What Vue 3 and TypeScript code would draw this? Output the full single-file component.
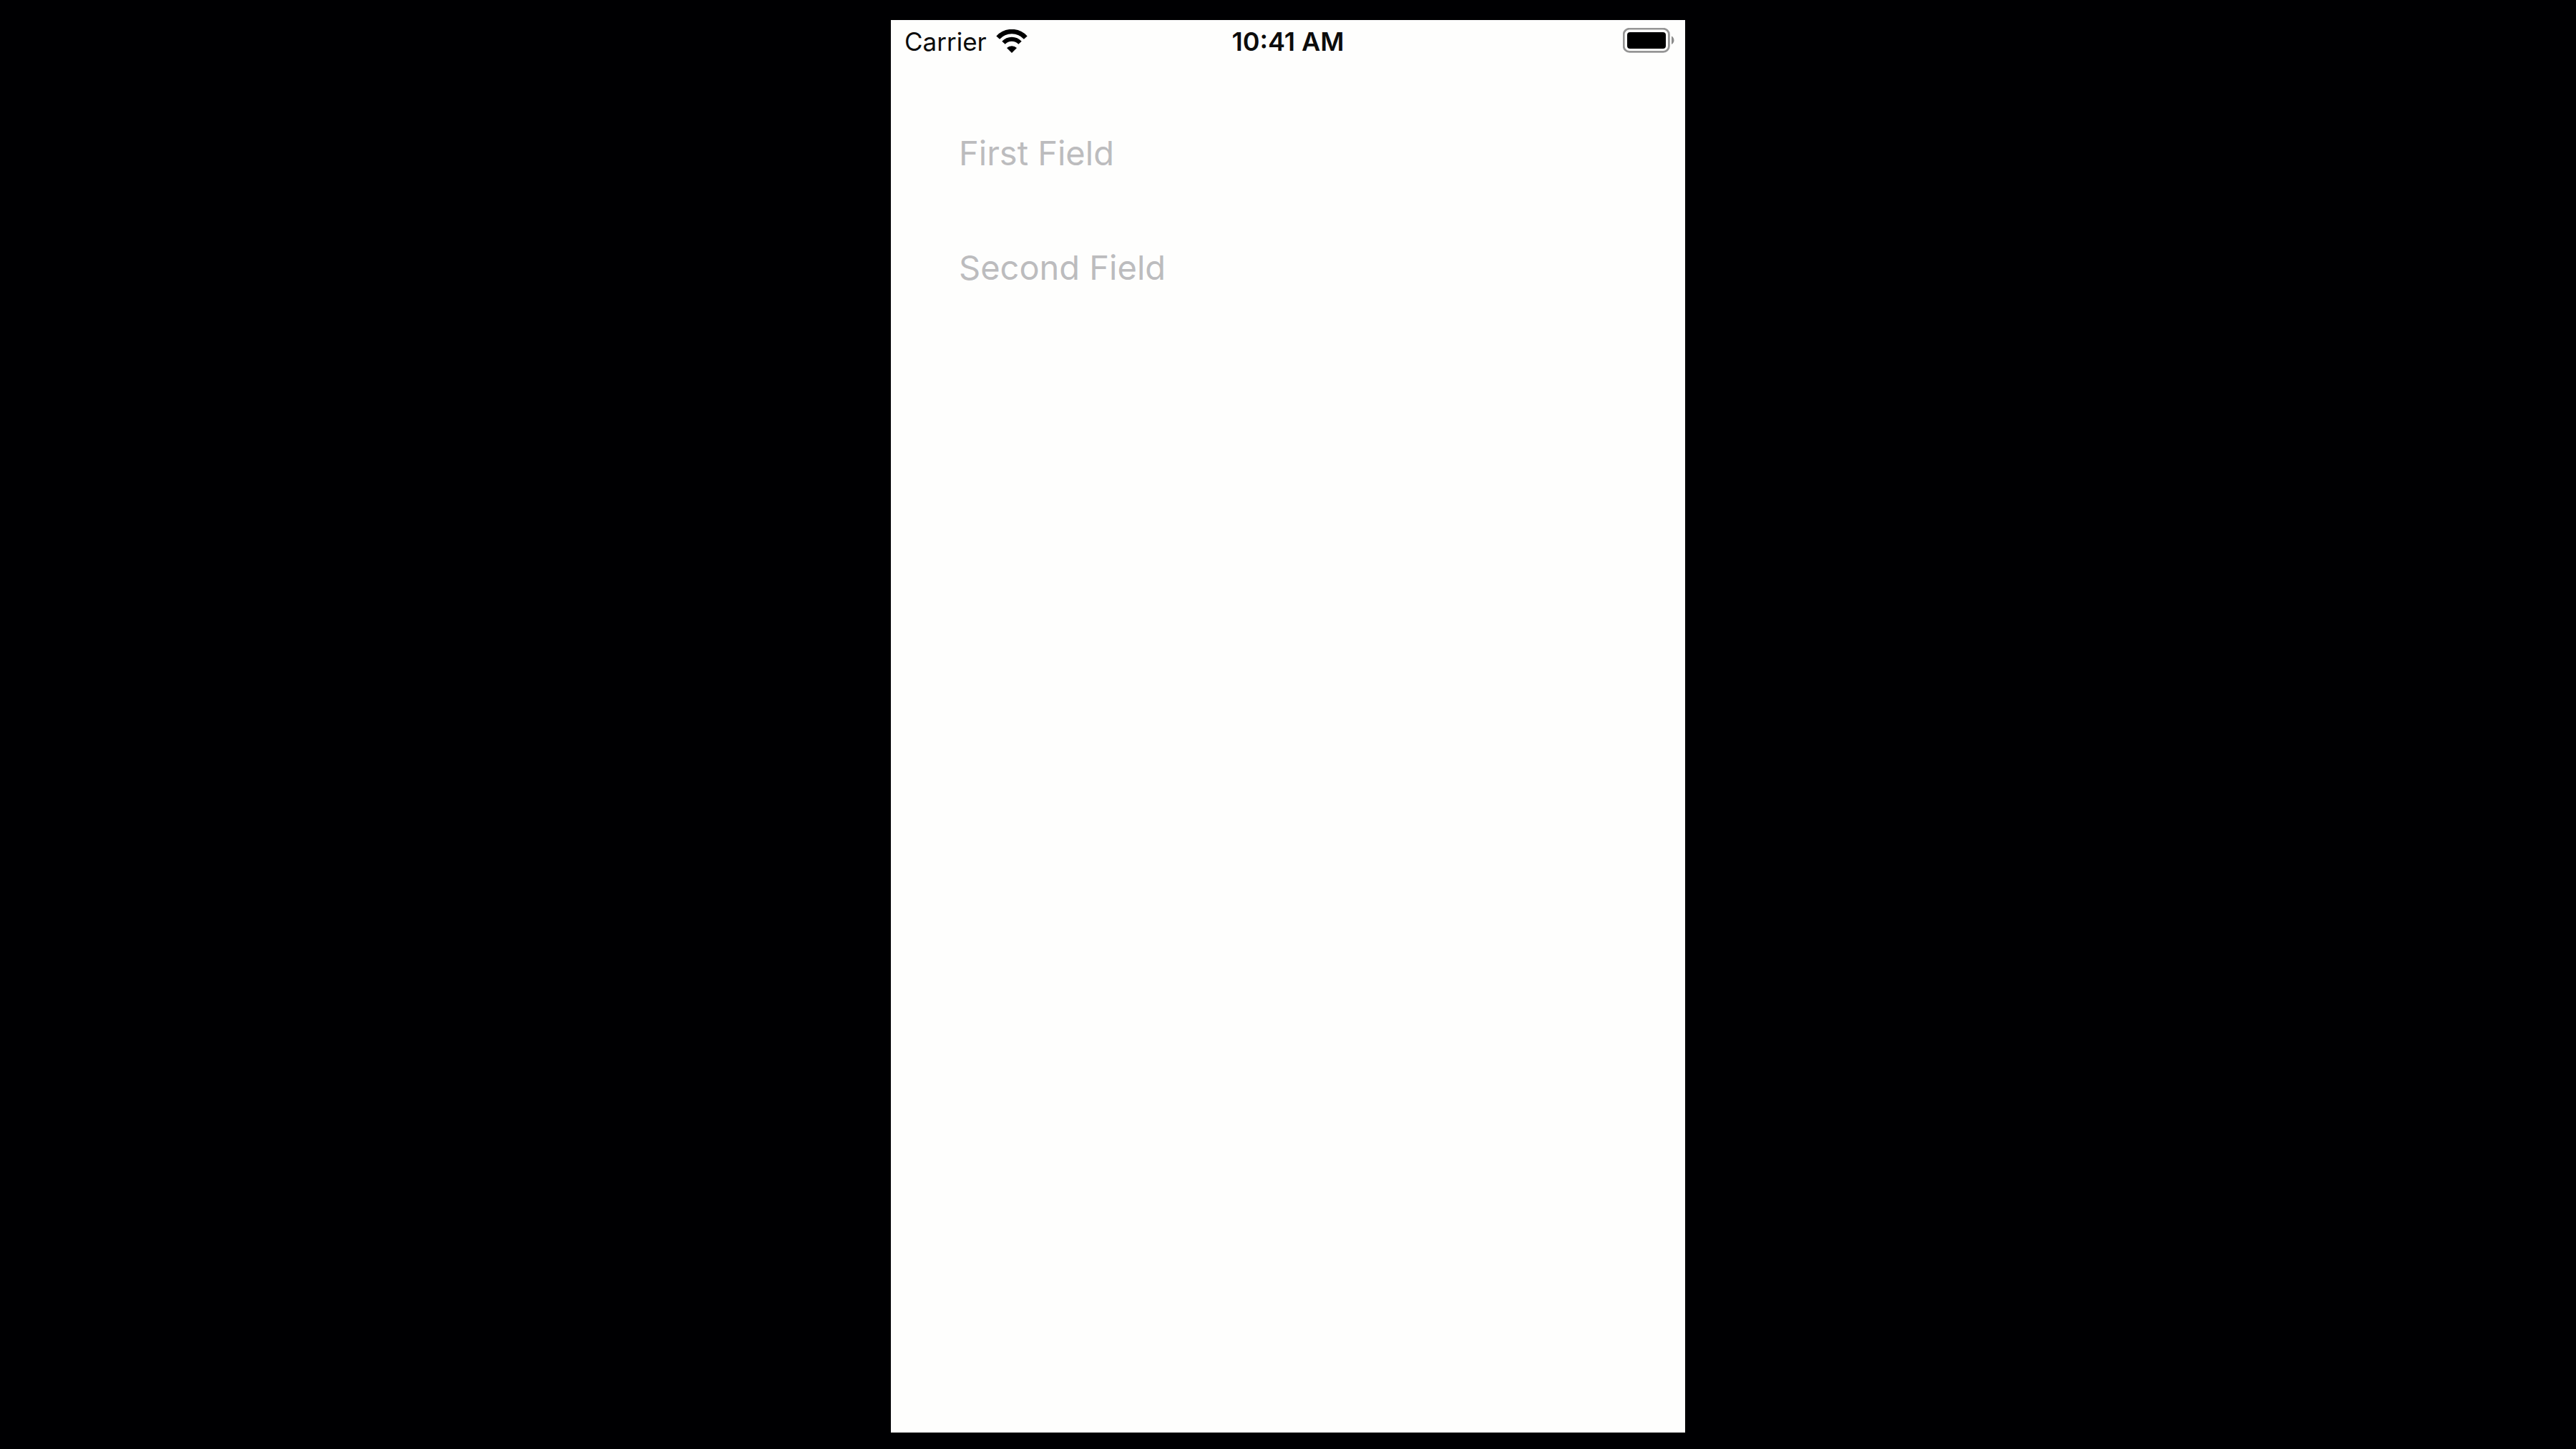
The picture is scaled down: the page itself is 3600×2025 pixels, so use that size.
<script setup lang="ts">
import { ref } from 'vue'

interface Field {
  id: string
  label: string
}

const fields: Field[] = [
  { id: 'first', label: 'First Field' },
  { id: 'second', label: 'Second Field' },
]

const values = ref<Record<string, string>>({ first: '', second: '' })
</script>

<template>
  <div class="stage">
    <main class="screen">
      <header class="status">
        <div class="carrier">
          <span>Carrier</span>
          <svg class="wifi" viewBox="0 0 44 35" aria-hidden="true">
            <path d="M2.7 11.6A26 26 0 0 1 41.3 11.6" stroke-width="6.4" />
            <path d="M10.5 18.8A15.5 15.5 0 0 1 33.5 18.8" stroke-width="6" />
            <path class="dot" d="M15 26A10 10 0 0 1 29 26L22 33Z" />
          </svg>
        </div>
        <time class="clock">10:41 AM</time>
        <svg class="battery" viewBox="0 0 72 38" aria-hidden="true">
          <rect class="case" x="1.2" y="1.2" width="63.2" height="32.2" rx="8" />
          <rect class="charge" x="6" y="6" width="54" height="23" rx="4" />
          <path class="cap" d="M68 11.5Q71.5 13.5 71.5 17.3T68 23Z" />
        </svg>
      </header>
      <form class="form" @submit.prevent>
        <input
          v-for="field in fields"
          :key="field.id"
          v-model="values[field.id]"
          class="field"
          type="text"
          :name="field.id"
          :placeholder="field.label"
          :aria-label="field.label"
        />
      </form>
    </main>
  </div>
</template>

<style>
body {
  margin: 0;
  background: #000002;
}
</style>

<style scoped>
.stage {
  display: flex;
  justify-content: center;
  box-sizing: border-box;
  min-height: 100vh;
  padding: 28px 0 23px;
  background: #000002;
  font-family: Inter, "Liberation Sans", sans-serif;
}

.screen {
  aspect-ratio: 185 / 329;
  min-height: calc(100vh - 51px);
  background: #fefefd;
}

.status {
  display: grid;
  grid-template-columns: 1fr auto 1fr;
  align-items: center;
  height: 60px;
  padding: 0 15px;
  color: #0c0c0c;
  font-size: 35px;
  line-height: 60px;
}

.carrier {
  display: flex;
  align-items: center;
  gap: 13px;
  padding-left: 4px;
}

.wifi {
  width: 44px;
  height: 35px;
  fill: none;
  stroke: #000;
}

.dot {
  fill: #000;
  stroke: none;
}

.clock {
  font-size: 36px;
  font-weight: 600;
}

.battery {
  justify-self: end;
  width: 72px;
  height: 38px;
}

.case {
  fill: none;
  stroke: #959595;
  stroke-width: 2.8;
}

.charge {
  fill: #000;
}

.cap {
  fill: #8c8c8c;
}

.form {
  display: flex;
  flex-direction: column;
  gap: 100px;
  padding: 96px 95px;
}

.field {
  width: 100%;
  height: 60px;
  padding: 0;
  border: 0;
  outline: 0;
  background: transparent;
  color: #0c0c0c;
  font: inherit;
  font-size: 47px;
  line-height: 60px;
}

.field::placeholder {
  color: #bcbcbe;
  opacity: 1;
}
</style>
